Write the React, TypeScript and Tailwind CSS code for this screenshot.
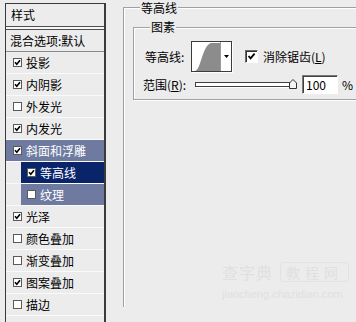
const font = "font-['Noto_Sans_CJK_SC','Noto_Sans',sans-serif]";

const SmallBox = ({ checked }: { checked: boolean }) => (
  <span className="w-[9px] h-[9px] shrink-0 border border-[#5a5a5a] bg-white flex items-center justify-center">
    {checked && (
      <svg viewBox="0 0 7 7" className="w-[7px] h-[7px]">
        <path d="M1 3.2 L2.8 5.2 L6 1.2" stroke="#000" strokeWidth="1.6" fill="none" />
      </svg>
    )}
  </span>
);

const BigBox = () => (
  <span className="w-[13px] h-[13px] shrink-0 border border-t-[#6a6a6a] border-l-[#6a6a6a] border-b-[#fff] border-r-[#fff] bg-white flex items-center justify-center shadow-[inset_1px_1px_0_#303030]">
    <svg viewBox="0 0 9 9" className="w-[9px] h-[9px]">
      <path d="M1.5 4 L3.6 6.4 L7.6 1.6" stroke="#000" strokeWidth="1.8" fill="none" />
    </svg>
  </span>
);

const top = [
  { label: '投影', checked: true },
  { label: '内阴影', checked: true },
  { label: '外发光', checked: false },
  { label: '内发光', checked: true },
];

const bottom = [
  { label: '光泽', checked: true },
  { label: '颜色叠加', checked: false },
  { label: '渐变叠加', checked: false },
  { label: '图案叠加', checked: true },
  { label: '描边', checked: false },
];

const Row = ({ label, checked }: { label: string; checked: boolean }) => (
  <div className="h-[22px] border-b border-[#fafafa] flex items-center gap-[4px] pl-[7px] text-[#000]">
    <SmallBox checked={checked} />
    <span>{label}</span>
  </div>
);

export default function App() {
  return (
    <div className={`relative w-[356px] h-[322px] overflow-hidden bg-[#ececec] flex items-start text-[12px] leading-[14px] ${font}`}>
      {/* style list */}
      <div className="ml-[5px] mt-[3px] w-[101px] h-[319px] shrink-0 border-l border-t border-r-2 border-[#3a3a3a]">
        <div className="h-[22px] pl-[5px] flex items-center">样式</div>
        <div className="h-[4px] border-t border-b border-[#505050] bg-[#f6f6f6]" />
        <div className="h-[22px] pl-[4px] flex items-center border-b border-[#8a8a8a]">混合选项:默认</div>
        {top.map((r) => (
          <Row key={r.label} {...r} />
        ))}
        <div className="h-[22px] border-b border-[#fafafa] flex items-center gap-[4px] pl-[7px] bg-[#6e7aa0] text-white">
          <SmallBox checked />
          <span>斜面和浮雕</span>
        </div>
        <div className="h-[22px] border-b border-[#fafafa] pl-[15px]">
          <div className="h-full flex items-center gap-[4px] pl-[6px] bg-[#0a246a] text-white">
            <SmallBox checked />
            <span>等高线</span>
          </div>
        </div>
        <div className="h-[22px] border-b border-[#fafafa] pl-[15px]">
          <div className="h-full flex items-center gap-[4px] pl-[6px] bg-[#6e7aa0] text-white">
            <SmallBox checked={false} />
            <span>纹理</span>
          </div>
        </div>
        {bottom.map((r) => (
          <Row key={r.label} {...r} />
        ))}
      </div>

      {/* settings */}
      <div className="pl-[17px] pt-[7px] shrink-0">
        <div className="w-[300px] h-[300px] border-l border-t border-[#a0a0a0] shadow-[inset_1px_1px_0_#fff] pl-[9px] pt-[19px]">
          <div className="h-0 relative">
            <span className="absolute left-[7px] top-[-25px] h-[12px] leading-[12px] px-[1px] bg-[#ececec] whitespace-nowrap">等高线</span>
          </div>
          <div className="w-[260px] h-[73px] border border-[#a0a0a0] shadow-[inset_1px_1px_0_#fff,1px_1px_0_#fff] pl-[11px]">
            <div className="h-0 relative">
              <span className="absolute left-[5px] top-[-7px] h-[12px] leading-[12px] px-[1px] bg-[#ececec] whitespace-nowrap">图素</span>
            </div>
            <div className="flex items-center h-[31px] mt-[13px] whitespace-nowrap">
              <span className="w-[46px]">等高线:</span>
              <div className="w-[41px] h-[31px] border border-[#3c3c3c] bg-white flex shadow-[1px_1px_0_#fff]">
                <svg viewBox="0 0 28 29" className="w-[28px] h-[29px]">
                  <path d="M3 29 C9 28 10 4 19 1 L28 1 L28 29 Z" fill="#8c8c8c" />
                </svg>
                <div className="flex-1 border-l border-[#9a9a9a] flex items-center justify-center">
                  <svg viewBox="0 0 5 3" className="w-[5px] h-[3px]">
                    <path d="M0 0 L5 0 L2.5 3 Z" fill="#000" />
                  </svg>
                </div>
              </div>
              <span className="ml-[13px]">
                <BigBox />
              </span>
              <span className="ml-[5px]">
                消除锯齿(<span className="underline">L</span>)
              </span>
            </div>
            <div className="flex items-center h-[19px] mt-[3px] -ml-[2px] whitespace-nowrap">
              <span className="w-[52px]">
                范围(<span className="underline">R</span>):
              </span>
              <div className="w-[96px] h-[5px] border border-[#404040] bg-white shadow-[1px_1px_0_#fff]" />
              <svg viewBox="0 0 8 10" className="w-[8px] h-[10px] -ml-[2px] mt-[-2px]">
                <path d="M0.5 9.5 L0.5 4 L4 0.5 L7.5 4 L7.5 9.5 Z" fill="#f4f4f4" stroke="#303030" strokeWidth="1" />
              </svg>
              <div className="ml-[5px] w-[36px] h-[19px] border border-t-[#7a7a7a] border-l-[#7a7a7a] border-b-[#fff] border-r-[#fff] bg-white shadow-[inset_1px_1px_0_#404040] pl-[3px] flex items-center">
                100
              </div>
              <span className="ml-[4px]">%</span>
            </div>
          </div>
        </div>
      </div>

      {/* watermark */}
      <div className="absolute left-[222px] top-[262px] w-[130px] text-[#e0e0e0] whitespace-nowrap">
        <div className="flex items-center gap-[7px]">
          <span className="text-[16px] leading-[20px] tracking-[1px]">查字典</span>
          <span className="border border-[#e2e2e2] rounded-[3px] px-[5px] text-[14px] leading-[18px] tracking-[5px]">教程网</span>
        </div>
        <div className="mt-[6px] text-[11px] leading-[12px] font-['Liberation_Sans',sans-serif]">jiaocheng.chazidian.com</div>
      </div>
    </div>
  );
}
